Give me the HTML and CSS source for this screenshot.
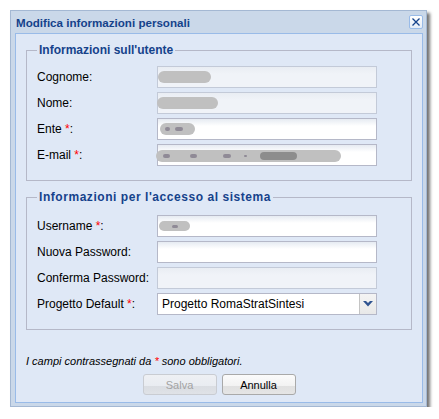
FILE: index.html
```html
<!DOCTYPE html>
<html lang="it">
<head>
<meta charset="utf-8">
<title>Modifica informazioni personali</title>
<link rel="stylesheet" href="styles.css">
</head>
<body>
<div class="window">
  <div class="titlebar">
    <span class="title">Modifica informazioni personali</span>
    <span class="close">
      <svg width="12" height="12" viewBox="0 0 12 12"><path d="M2.5 2.5 L9.5 9.5 M9.5 2.5 L2.5 9.5" stroke="#15428b" stroke-width="1.3" fill="none"/></svg>
    </span>
  </div>
  <div class="panel">
    <fieldset class="group g1">
      <legend>Informazioni sull'utente</legend>
      <div class="row">
        <span class="lbl">Cognome:</span>
        <div class="field disabled"><span class="blob b-cognome"></span></div>
      </div>
      <div class="row">
        <span class="lbl">Nome:</span>
        <div class="field disabled"><span class="blob b-nome"></span></div>
      </div>
      <div class="row">
        <span class="lbl">Ente <span class="req">*</span>:</span>
        <div class="field"><span class="blob b-ente"><i class="dot d1"></i><i class="dot d2"></i></span></div>
      </div>
      <div class="row">
        <span class="lbl">E-mail <span class="req">*</span>:</span>
        <div class="field"><span class="blob b-mail"><i class="dot m1"></i><i class="dot m2"></i><i class="dot m3"></i><i class="dot m4"></i><i class="dot m5"></i></span></div>
      </div>
    </fieldset>
    <fieldset class="group g2">
      <legend>Informazioni per l'accesso al sistema</legend>
      <div class="row">
        <span class="lbl">Username <span class="req">*</span>:</span>
        <div class="field"><span class="blob b-user"><i class="dot u1"></i></span></div>
      </div>
      <div class="row">
        <span class="lbl">Nuova Password:</span>
        <div class="field"></div>
      </div>
      <div class="row">
        <span class="lbl">Conferma Password:</span>
        <div class="field disabled"></div>
      </div>
      <div class="row">
        <span class="lbl">Progetto Default <span class="req">*</span>:</span>
        <div class="field combo">
          <span class="combo-text">Progetto RomaStratSintesi</span>
          <span class="trigger">
            <svg width="10" height="6" viewBox="0 0 10 6"><path d="M0 0 H3 L5 2 L7 0 H10 L5 5.5 Z" fill="#2f5390"/></svg>
          </span>
        </div>
      </div>
    </fieldset>
    <p class="note">I campi contrassegnati da <span class="req">*</span> sono obbligatori.</p>
    <div class="buttons">
      <button class="btn is-disabled" type="button">Salva</button>
      <button class="btn" type="button">Annulla</button>
    </div>
  </div>
</div>
</body>
</html>
```
FILE: styles.css
```css
html, body {
  margin: 0;
  padding: 0;
  background: #ffffff;
}

body {
  font-family: "Liberation Sans", Arial, sans-serif;
  font-size: 12px;
  color: #000;
}

.window {
  margin: 10px 0 0 10px;
  width: 417px;
  height: 397px;
  box-sizing: border-box;
  border: 1px solid #a4b8d3;
  background: #cad8e9;
  padding: 0 3px 3px 4px;
  box-shadow: 3px 3px 3px rgba(0, 0, 0, 0.55);
  display: flex;
  flex-direction: column;
}

.titlebar {
  height: 22px;
  display: flex;
  align-items: center;
  justify-content: space-between;
  padding-left: 1px;
}

.title {
  font-weight: bold;
  font-size: 11.6px;
  color: #15428b;
}

.close {
  width: 14px;
  height: 14px;
  box-sizing: border-box;
  border: 1px solid #99bbe8;
  border-radius: 2px;
  background: linear-gradient(#ffffff, #e4ecf7);
  display: flex;
  align-items: center;
  justify-content: center;
  margin-top: -1px;
}

.close svg { display: block; }

.panel {
  flex: 1;
  border: 1px solid #99bbe8;
  background: #dfe8f6;
  display: flex;
  flex-direction: column;
}

.group {
  margin: 9px 10px 0;
  padding: 9px 10px 14px;
  border: 1px solid #b5b8c8;
  min-width: 0;
  display: flex;
  flex-direction: column;
  gap: 4px;
}

.group legend {
  padding: 0 2px;
  font-weight: bold;
  font-size: 12px;
  line-height: 14px;
  color: #15428b;
}

.g2 {
  margin-top: 9px;
  padding-top: 11px;
  padding-bottom: 14px;
}

.g2 legend {
  letter-spacing: 0.55px;
}

.row {
  display: flex;
  align-items: center;
  height: 22px;
}

.lbl {
  width: 120px;
  flex: none;
}

.req { color: #ff0000; }

.field {
  width: 220px;
  height: 22px;
  box-sizing: border-box;
  border: 1px solid #b5b8c8;
  background: linear-gradient(#e6ebf2, #ffffff 7px, #ffffff);
  display: flex;
  align-items: center;
}

.field.disabled {
  border-color: #c3cad8;
  background: linear-gradient(#e9edf3, #f0f3f8 7px, #f0f3f8);
}

.blob {
  display: flex;
  align-items: center;
  background: #c0c0c0;
  border-radius: 7px;
  filter: blur(0.4px);
  flex: none;
}

.b-cognome { width: 53px; height: 12px; }
.b-nome { width: 61px; height: 12px; margin-left: -1px; }
.b-ente { width: 35px; height: 12px; margin-left: 2px; }
.b-mail { width: 185px; height: 12px; margin-left: -2px; margin-top: 2px; }
.b-user { width: 31px; height: 10px; margin-left: 1px; }

.dot {
  display: block;
  height: 4px;
  border-radius: 2px;
  background: #8f8a96;
  flex: none;
}

.d1 { width: 5px; margin-left: 5px; }
.d2 { width: 8px; margin-left: 5px; }
.m1 { width: 7px; margin-left: 7px; }
.m2 { width: 7px; margin-left: 20px; }
.m3 { width: 8px; margin-left: 26px; }
.m4 { width: 3px; margin-left: 13px; height: 2px; }
.m5 { width: 37px; height: 8px; margin-left: 13px; border-radius: 4px; background: #8d8d8d; }
.u1 { width: 6px; height: 3px; margin-left: 13px; }

.combo {
  background: #ffffff;
  justify-content: space-between;
}

.combo-text {
  padding-left: 4px;
}

.trigger {
  width: 17px;
  height: 100%;
  box-sizing: border-box;
  border-left: 1px solid #c4c4c4;
  background: linear-gradient(#f4f4f4, #e8e8e8);
  display: flex;
  align-items: center;
  justify-content: center;
}

.trigger svg { display: block; }

.note {
  margin: 25px 0 0 10px;
  font-style: italic;
  font-size: 11px;
  line-height: 13px;
}

.buttons {
  display: flex;
  justify-content: center;
  gap: 5px;
  margin-top: 6px;
}

.btn {
  width: 74px;
  height: 21px;
  box-sizing: border-box;
  border: 1px solid #a9a9a9;
  border-radius: 3px;
  background: linear-gradient(#fbfbfb, #f2f2f2 58%, #e0e0e0 58%, #e5e5e5);
  font-family: "Liberation Sans", Arial, sans-serif;
  font-size: 11px;
  color: #000;
  padding: 0;
}

.btn.is-disabled {
  border-color: #c9ccd2;
  color: #a3a3a3;
  background: linear-gradient(#eef0f4, #e9ecf1 58%, #dadde2 58%, #dfe2e7);
}
```
